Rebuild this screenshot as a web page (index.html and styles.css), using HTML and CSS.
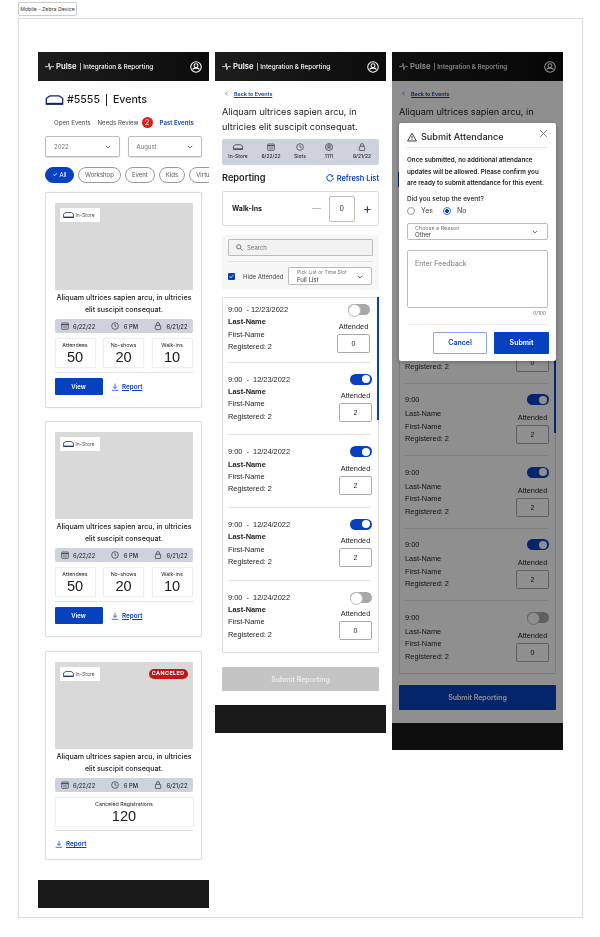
FILE: index.html
```html
<!DOCTYPE html>
<html lang="en">
<head>
<meta charset="utf-8"/>
<meta name="viewport" content="width=device-width,initial-scale=1"/>
<title>Mobile - Zebra Device</title>
<link rel="stylesheet" href="styles.css">
</head>
<body>
<svg class="defs" width="0" height="0">
  <symbol id="store" viewBox="0 0 20 11"><path d="M1 3.6 5 1h10l4 2.6V10H1z" fill="none" stroke="currentColor" stroke-width="1.4"/><path d="M1 9.6h18" stroke="currentColor" stroke-width="2"/></symbol>
  <symbol id="pulse" viewBox="0 0 14 12"><path d="M0 6.2h5.2L6.4 1l1.2 10 1.2-4.8H14" fill="none" stroke="currentColor" stroke-width="1.2"/></symbol>
  <symbol id="user" viewBox="0 0 16 16"><circle cx="8" cy="8" r="7" fill="none" stroke="currentColor" stroke-width="1.4"/><circle cx="8" cy="6.2" r="2.6" fill="none" stroke="currentColor" stroke-width="1.4"/><path d="M3.4 11.2c1-1.3 2.4-1.7 4.6-1.7s3.6.4 4.6 1.7" fill="none" stroke="currentColor" stroke-width="1.4"/></symbol>
  <symbol id="cal" viewBox="0 0 12 12"><rect x="1" y="1.5" width="10" height="9.5" rx="1" fill="none" stroke="currentColor"/><path d="M1 4h10" stroke="currentColor" stroke-width="1.4"/><path d="M3 6.5h6M3 8.5h6" stroke="currentColor" stroke-width=".6"/></symbol>
  <symbol id="clock" viewBox="0 0 12 12"><circle cx="6" cy="6" r="5" fill="none" stroke="currentColor"/><path d="M6 3v3.2l2.2 1.2" fill="none" stroke="currentColor"/></symbol>
  <symbol id="lock" viewBox="0 0 12 12"><rect x="2" y="5" width="8" height="6.2" rx="1" fill="none" stroke="currentColor"/><path d="M3.8 5V3a2.2 2.2 0 0 1 4.4 0v2" fill="none" stroke="currentColor"/></symbol>
  <symbol id="down" viewBox="0 0 12 12"><path d="M6 1v7M3 5.4 6 8.2l3-2.8M1 11h10" fill="none" stroke="currentColor" stroke-width="1.1"/></symbol>
  <symbol id="chev" viewBox="0 0 10 6"><path d="M1.5 1 5 4.5 8.5 1" fill="none" stroke="currentColor" stroke-width="1.3"/></symbol>
  <symbol id="warn" viewBox="0 0 12 11"><path d="M6 1 11.3 10.3H.7z" fill="none" stroke="currentColor"/><path d="M6 4.2v3.2M6 8.2v1" stroke="currentColor"/></symbol>
  <symbol id="refresh" viewBox="0 0 12 12"><path d="M10 3.2A4.8 4.8 0 1 0 10.8 6" fill="none" stroke="currentColor" stroke-width="1.5"/><path d="M10.8.6v3.6H7.2z" fill="currentColor"/></symbol>
  <symbol id="close" viewBox="0 0 10 10"><path d="M1 1l8 8M9 1l-8 8" stroke="currentColor" stroke-width=".8"/></symbol>
</svg>

<div class="tag">Mobile - Zebra Device</div>
<div class="frame">

  <!-- events list -->
  <div class="phone">
    <div class="topbar">
      <svg class="logo"><use href="#pulse"/></svg><b>Pulse</b><span>| Integration &amp; Reporting</span>
      <svg class="me"><use href="#user"/></svg>
    </div>
    <div class="body events">
      <div class="pagehead"><svg class="storebig"><use href="#store"/></svg>#5555 <i></i> Events</div>
      <div class="tabs">
        <span>Open Events</span><span>Needs Review</span><em>2</em><a>Past Events</a>
      </div>
      <div class="selects">
        <div class="sel">2022<svg><use href="#chev"/></svg></div>
        <div class="sel">August<svg><use href="#chev"/></svg></div>
      </div>
      <div class="chips">
        <span class="chip on">✓ All</span><span class="chip">Workshop</span><span class="chip">Event</span><span class="chip">Kids</span><span class="chip">Virtual</span>
      </div>

      <div class="card">
        <div class="pic"><div class="kind"><svg><use href="#store"/></svg>In-Store</div></div>
        <p class="name">Aliquam ultrices sapien arcu, in ultricies elit suscipit consequat.</p>
        <div class="meta">
          <span><svg><use href="#cal"/></svg>6/22/22</span><span><svg><use href="#clock"/></svg>6 PM</span><span><svg><use href="#lock"/></svg>6/21/22</span>
        </div>
        <div class="stats">
          <div class="stat"><small>Attendees</small>50</div>
          <div class="stat"><small>No-shows</small>20</div>
          <div class="stat"><small>Walk-ins</small>10</div>
        </div>
        <div class="actions"><button class="view">View</button><a class="report"><svg><use href="#down"/></svg><u>Report</u></a></div>
      </div>

      <div class="card">
        <div class="pic"><div class="kind"><svg><use href="#store"/></svg>In-Store</div></div>
        <p class="name">Aliquam ultrices sapien arcu, in ultricies elit suscipit consequat.</p>
        <div class="meta">
          <span><svg><use href="#cal"/></svg>6/22/22</span><span><svg><use href="#clock"/></svg>6 PM</span><span><svg><use href="#lock"/></svg>6/21/22</span>
        </div>
        <div class="stats">
          <div class="stat"><small>Attendees</small>50</div>
          <div class="stat"><small>No-shows</small>20</div>
          <div class="stat"><small>Walk-ins</small>10</div>
        </div>
        <div class="actions"><button class="view">View</button><a class="report"><svg><use href="#down"/></svg><u>Report</u></a></div>
      </div>

      <div class="card short">
        <div class="pic"><div class="kind"><svg><use href="#store"/></svg>In-Store</div><div class="canceled">CANCELED</div></div>
        <p class="name">Aliquam ultrices sapien arcu, in ultricies elit suscipit consequat.</p>
        <div class="meta">
          <span><svg><use href="#cal"/></svg>6/22/22</span><span><svg><use href="#clock"/></svg>6 PM</span><span><svg><use href="#lock"/></svg>6/21/22</span>
        </div>
        <div class="stat wide"><small>Canceled Registrations</small>120</div>
        <div class="actions"><a class="report"><svg><use href="#down"/></svg><u>Report</u></a></div>
      </div>
    </div>
    <div class="foot"></div>
  </div>

  <!-- reporting -->
  <div class="phone">
    <div class="topbar">
      <svg class="logo"><use href="#pulse"/></svg><b>Pulse</b><span>| Integration &amp; Reporting</span>
      <svg class="me"><use href="#user"/></svg>
    </div>
    <div class="body report-page">
      <a class="back"><svg><use href="#chev"/></svg><u>Back to Events</u></a>
      <h2>Aliquam ultrices sapien arcu, in ultricies elit suscipit consequat.</h2>
      <div class="infobar">
        <span><svg class="w"><use href="#store"/></svg>In-Store</span>
        <span><svg><use href="#cal"/></svg>6/22/22</span>
        <span><svg><use href="#clock"/></svg>Slots</span>
        <span><svg><use href="#user"/></svg>1111</span>
        <span><svg><use href="#lock"/></svg>6/21/22</span>
      </div>
      <div class="rephead"><h3>Reporting</h3><a><svg><use href="#refresh"/></svg>Refresh List</a></div>
      <div class="walkins"><b>Walk-Ins</b><span class="minus"></span><div class="count">0</div><span class="plus">+</span></div>
      <div class="filters">
        <div class="search"><svg viewBox="0 0 10 10"><circle cx="4" cy="4" r="3" fill="none" stroke="#444"/><path d="m6.2 6.2 3 3" stroke="#444"/></svg>Search</div>
        <div class="filterrow">
          <span class="check">✓</span><span class="hide">Hide Attended</span>
          <div class="pick"><small>Pick List or Time Slot</small>Full List<svg><use href="#chev"/></svg></div>
        </div>
      </div>
      <div class="list">
        <div class="scroll"></div>
        <div class="row first"><div class="who"><div>9:00 &nbsp;- 12/23/2022</div><b>Last-Name</b><div>First-Name</div><div>Registered: 2</div></div><div class="att left"><span class="tog"></span><label>Attended</label><div class="num">0</div></div></div>
        <div class="row"><div class="who"><div>9:00 &nbsp;- &nbsp;12/23/2022</div><b>Last-Name</b><div>First-Name</div><div>Registered: 2</div></div><div class="att"><span class="tog on"></span><label>Attended</label><div class="num">2</div></div></div>
        <div class="row"><div class="who"><div>9:00 &nbsp;- &nbsp;12/24/2022</div><b>Last-Name</b><div>First-Name</div><div>Registered: 2</div></div><div class="att"><span class="tog on"></span><label>Attended</label><div class="num">2</div></div></div>
        <div class="row"><div class="who"><div>9:00 &nbsp;- &nbsp;12/24/2022</div><b>Last-Name</b><div>First-Name</div><div>Registered: 2</div></div><div class="att"><span class="tog on"></span><label>Attended</label><div class="num">2</div></div></div>
        <div class="row last"><div class="who"><div>9:00 &nbsp;- &nbsp;12/24/2022</div><b>Last-Name</b><div>First-Name</div><div>Registered: 2</div></div><div class="att"><span class="tog"></span><label>Attended</label><div class="num">0</div></div></div>
      </div>
      <button class="submit off">Submit Reporting</button>
    </div>
    <div class="foot"></div>
  </div>

  <!-- submit attendance dialog -->
  <div class="phone dimmed">
    <div class="topbar">
      <svg class="logo"><use href="#pulse"/></svg><b>Pulse</b><span>| Integration &amp; Reporting</span>
      <svg class="me"><use href="#user"/></svg>
    </div>
    <div class="body report-page">
      <a class="back"><svg><use href="#chev"/></svg><u>Back to Events</u></a>
      <h2>Aliquam ultrices sapien arcu, in</h2>
      <div class="list under">
        <div class="scroll"></div>
        <div class="row plain"><div class="who"><div>9:00</div><div>Last-Name</div><div>First-Name</div><div>Registered: 2</div></div><div class="att"><span class="tog"></span><label class="covered">Attended</label><div class="num">0</div></div></div>
        <div class="row plain"><div class="who"><div>9:00</div><div>Last-Name</div><div>First-Name</div><div>Registered: 2</div></div><div class="att"><span class="tog on"></span><label>Attended</label><div class="num">2</div></div></div>
        <div class="row plain"><div class="who"><div>9:00</div><div>Last-Name</div><div>First-Name</div><div>Registered: 2</div></div><div class="att"><span class="tog on"></span><label>Attended</label><div class="num">2</div></div></div>
        <div class="row plain"><div class="who"><div>9:00</div><div>Last-Name</div><div>First-Name</div><div>Registered: 2</div></div><div class="att"><span class="tog on"></span><label>Attended</label><div class="num">2</div></div></div>
        <div class="row plain nob"><div class="who"><div>9:00</div><div>Last-Name</div><div>First-Name</div><div>Registered: 2</div></div><div class="att"><span class="tog"></span><label>Attended</label><div class="num">0</div></div></div>
      </div>
      <button class="submit">Submit Reporting</button>
    </div>
    <div class="foot"></div>
    <div class="edge"></div>
    <div class="scrim"></div>
    <div class="modal">
      <div class="mhead"><svg><use href="#warn"/></svg><h4>Submit Attendance</h4><svg class="x"><use href="#close"/></svg></div>
      <p class="warntext">Once submitted, no additional attendance updates will be allowed. Please confirm you are ready to submit attendance for this event.</p>
      <div class="q">Did you setup the event?</div>
      <div class="radios"><span class="radio"></span><span>Yes</span><span class="radio sel2"></span><span>No</span></div>
      <div class="reason"><small>Choose a Reason</small>Other<svg><use href="#chev"/></svg></div>
      <div class="feedback">Enter Feedback</div>
      <div class="counter">0/100</div>
      <div class="mbtns"><button class="cancel">Cancel</button><button class="ok">Submit</button></div>
    </div>
  </div>

</div>
</body>
</html>
```

FILE: styles.css
```css
*{box-sizing:border-box}
body{margin:0;background:#fff;color:#1c1c1c;font-family:Inter,"Liberation Sans",sans-serif}
.defs{position:absolute}
svg{display:block}
button{font-family:inherit;border:0;padding:0}
p,h2,h3,h4{margin:0}
.tag{width:59px;height:14px;margin:2px 0 2px 18px;border:1px solid #ccc;border-radius:2px;font-size:5.2px;line-height:12px;text-align:center;color:#333}
.frame{width:565px;height:900px;margin-left:18px;border:1px solid #ddd;padding:33px 0 0 19px;display:flex;gap:6px;align-items:flex-start;will-change:transform}

.phone{width:171px;position:relative;overflow:hidden;background:#fff}
.topbar{height:29px;background:linear-gradient(90deg,#1d1d1d,#0c0c0c);color:#fff;display:flex;align-items:center;padding-left:7px;font-size:6.35px;font-weight:500}
.topbar b{font-size:7.7px;font-weight:600;margin-right:3px}
.topbar .logo{width:9px;height:9px;margin-right:2px}
.topbar .me{width:12px;height:12px;margin-left:auto;margin-right:7px}
.foot{height:28px;background:#1a1a1a}

/* events */
.events{padding:0 7px;height:799px}
.pagehead{height:36px;display:flex;align-items:center;font-size:10.6px;font-weight:500;gap:3px;color:#1c1c1c;padding-top:1px}
.pagehead i{width:1px;height:12px;background:#222;margin:0 3px}
.storebig{width:19px;height:10px;color:#14275c}
.tabs{display:flex;align-items:center;height:14px;margin-top:-2px;padding-left:9px;font-size:6.1px;color:#444;gap:7px}
.tabs em{font-style:normal;width:11px;height:11px;border-radius:50%;background:#d81e1e;color:#fff;text-align:center;line-height:11px;font-size:7.5px;margin-left:-4px}
.tabs a{color:#0b3fb5;font-weight:600}
.selects{display:flex;gap:8px;margin-top:7px}
.sel{width:74.5px;height:21px;border:1px solid #bbb;border-radius:2px;display:flex;align-items:center;justify-content:space-between;padding:0 8px;font-size:6px;color:#777;box-shadow:0 1px 1px #ddd}
.sel svg{width:6px;height:4px;color:#333}
.chips{display:flex;gap:4px;margin-top:10px;width:164px;overflow:hidden}
.chip{height:16px;line-height:14px;padding:0 6px;border:1px solid #999;border-radius:8px;font-size:6px;color:#555;flex:none}
.chip.on{background:#0841c0;border-color:#0841c0;color:#fff;padding:0 6.5px}
.card{width:157px;height:216px;margin-top:9px;border:1px solid #ddd;border-radius:2px;padding:10px 8.5px 0;box-shadow:0 0 1px #ccc}
.card+.card{margin-top:13px}
.card.short{height:209px;margin-top:14px}
.pic{height:87px;background:#d9d9d9;border-radius:1px;padding:5px;display:flex;justify-content:space-between;align-items:flex-start}
.kind{width:40px;height:14px;background:#fff;border-radius:1px;display:flex;align-items:center;gap:2px;padding-left:3px;font-size:5px;color:#555}
.kind svg{width:11px;height:6px;color:#14275c}
.canceled{background:#c01818;color:#fff;font-size:5.4px;font-weight:700;letter-spacing:.4px;height:9.5px;line-height:9.5px;padding:0 3px;border-radius:5px;margin-top:2px}
.name{font-size:7.1px;font-weight:500;line-height:11.6px;text-align:center;margin-top:2px;color:#1c1c1c;width:139px}
.meta{height:14px;background:#cdd2dc;border-radius:2px;margin-top:4px;display:flex;justify-content:space-between;align-items:center;padding:0 5px 0 6px;font-size:5.8px;font-weight:500;color:#2c2c34}
.meta span{display:flex;align-items:center;gap:4.5px}
.meta svg{width:8px;height:8px}
.stats{display:flex;justify-content:space-between;margin-top:5px;padding-bottom:4px;border-bottom:1.5px solid #e4e4e4}
.stat{width:41px;height:30px;border:1px solid #eee;border-radius:1px;box-shadow:0 0 1px #ddd;text-align:center;font-family:"Liberation Sans",sans-serif;font-size:14.6px;line-height:15px;color:#1a1a1a}
.stat small{display:block;font-family:Inter,sans-serif;font-size:5.3px;line-height:6px;padding-top:3px;margin-bottom:2px;color:#222}
.stat.wide{width:139px;height:30px;margin-top:5px}
.actions{display:flex;align-items:center;gap:8px;margin-top:5px}
.view{width:48px;height:17px;background:#0841c0;color:#fff;border-radius:1px;font-size:6px;font-weight:600}
.report{display:flex;align-items:center;gap:3.5px;color:#0b3fb5;font-size:6.3px;font-weight:600}
.report svg{width:8px;height:8px}
.short .actions{padding-top:9px;border-top:1px solid #ddd;margin-top:3px}

/* reporting */
.report-page{padding:0 7px}
.back{display:flex;align-items:center;gap:5px;height:25px;color:#0b3fb5;font-size:5.4px;font-weight:600;padding-left:2px}
.back svg{width:5px;height:5px;transform:rotate(90deg)}
h2{font-size:9.15px;font-weight:400;line-height:14.5px;height:32px;margin-top:-1px;color:#1c1c1c}
.infobar{height:26px;background:#cdd2dc;border-radius:2px;display:grid;grid-template-columns:32px 34px 24px 34px 32px;justify-items:center;margin-top:2px;padding-top:4px;font-size:5px;font-weight:500;color:#2c2c34}
.infobar span{display:flex;flex-direction:column;align-items:center;gap:2px}
.infobar svg{width:8px;height:8px}
.infobar svg.w{width:10px}
.rephead{display:flex;justify-content:space-between;align-items:center;height:26px}
h3{font-size:9.2px;font-weight:600;margin-top:-1px}
.rephead a{display:flex;align-items:center;gap:3px;font-size:7.4px;font-weight:600;color:#0b3fb5}
.rephead svg{width:8px;height:8px}
.walkins{height:35px;border:1px solid #ddd;border-radius:2px;display:flex;align-items:center;padding:0 6px 0 9px;font-size:7px}
.minus{width:9px;height:1px;background:#bbb;margin-left:auto;margin-right:8px}
.count{width:26px;height:26px;border:1px solid #bbb;border-radius:2px;text-align:center;line-height:24px;color:#333;font-size:7px}
.plus{color:#0b3fb5;font-size:14px;margin-left:8px;line-height:14px;margin-top:-2px}
.filters{height:55px;margin-top:9px;background:#f7f7f7;padding:4px 6px 0}
.search{height:17px;border:1px solid #bbb;border-radius:1px;background:#f2f2f2;display:flex;align-items:center;gap:4px;padding-left:7px;font-size:6px;color:#777}
.search svg{width:7px;height:7px}
.filterrow{display:flex;align-items:center;margin-top:5px;border-top:1px solid #e2e2e2;padding-top:5px}
.check{width:7px;height:7px;background:#0f3fae;color:#fff;font-size:6px;line-height:7px;text-align:center;margin-right:8px;border-radius:1px}
.hide{font-size:6px;color:#444;width:45px}
.pick{width:84px;height:18px;border:1px solid #bbb;border-radius:2px;padding:0 8px;font-size:6px;color:#333;line-height:7px;position:relative;background:#fff}
.pick small{display:block;font-size:5px;color:#777;padding-top:1px;line-height:6px;margin-bottom:1px}
.pick svg,.reason svg{position:absolute;right:8px;top:7px;width:6px;height:4px}

.list{position:relative;margin-top:7px;height:356px;border:1px solid #ddd;border-radius:1px;font-family:"Liberation Sans",sans-serif}
.scroll{position:absolute;right:-1px;top:-1px;width:2px;height:123px;background:#0841c0}
.row{display:flex;justify-content:space-between;margin:0 7px 0 5px;padding:11px 0;border-bottom:1px solid #e2e2e2;font-size:7.4px;line-height:12.4px;color:#222}
.row.first{padding:6px 0 8px}
.row.last{padding:11px 0 13px;border-bottom:0}
.att{width:33px;display:flex;flex-direction:column;align-items:flex-end;margin-right:-1px}
.att.left{margin-right:1px}
.att label{display:block;width:33px;text-align:center;margin-top:6.5px;line-height:10px}
.tog{display:block;width:22px;height:11px;border-radius:6px;background:#a8a8a8;position:relative}
.tog:after{content:"";position:absolute;left:0;top:0;width:11px;height:11px;border-radius:50%;background:#fff;border:1px solid #bbb}
.tog.on{background:#0841c0}
.tog.on:after{left:12px;top:1.5px;width:8px;height:8px;border:0}
.num{width:33px;height:19px;border:1px solid #aaa;border-radius:2px;margin-top:2px;text-align:center;line-height:17px;font-size:7px}
.submit{display:block;width:157px;height:24px;margin-top:14px;background:#0841c0;color:#fff;border-radius:1px;font-size:7px;font-weight:600;margin-bottom:14px}
.submit.off{background:#c4c4c4;color:#ececec}

/* dialog */
.under{margin-top:173px;height:364px}
.row.plain{padding:10.5px 0 0;height:72.5px}
.row.plain .who div{line-height:12.6px}
.row.plain .who div:first-child{margin-bottom:1.5px}
.row.plain label{margin-top:8px}
.row.plain label.covered{visibility:hidden}
.row.nob{border-bottom:0}
.dimmed .submit{margin-top:11px;height:25px;margin-bottom:13px}
.dimmed .foot{height:27px}
.edge{position:absolute;left:6px;top:120px;width:1px;height:15px;background:#0841c0}
.scrim{position:absolute;inset:0;background:rgba(0,0,0,.44)}
.modal{position:absolute;left:7px;top:71px;width:157px;height:238px;background:#fff;border-radius:2px;box-shadow:0 1px 4px rgba(0,0,0,.3);padding:0 8px}
.mhead{height:25px;display:flex;align-items:center;gap:4px;border-bottom:1px solid #e6e6e6;padding-top:3px}
.mhead svg{width:10px;height:10px}
h4{font-size:9.1px;font-weight:500}
.mhead .x{width:9px;height:9px;margin-left:auto;margin-right:0;margin-top:-6px;color:#555}
.warntext{font-size:6.25px;font-weight:600;line-height:11.6px;margin-top:7px;color:#222}
.q{font-size:6.5px;font-weight:500;margin-top:3px;line-height:12px}
.radios{display:flex;align-items:center;font-size:7px;color:#444;height:12px}
.radio{width:8px;height:8px;border-radius:50%;border:1px solid #999;margin-right:6px}
.radio.sel2{border-color:#3a6fd8;background:radial-gradient(circle,#0841c0 45%,#fff 50%);margin-left:10px}
.reason{position:relative;height:17px;margin-top:6px;border:1px solid #bbb;border-radius:2px;padding-left:7px;font-size:6.1px;line-height:7px;color:#333}
.reason small{display:block;font-size:5.4px;line-height:6px;color:#777;padding-top:1px}
.reason svg{top:6px;right:9px}
.feedback{height:58px;margin-top:10px;border:1px solid #bbb;border-radius:2px;padding:8px 7px;font-size:7px;color:#777}
.counter{font-size:4.8px;text-align:right;color:#666;margin-top:2px;padding-right:2px;height:15px;border-bottom:1px solid #eee;line-height:6px}
.mbtns{display:flex;justify-content:flex-end;gap:7px;margin-top:7px;margin-right:-1px}
.mbtns button{height:22px;font-size:7px;font-weight:600;border-radius:1px}
.cancel{width:54px;background:#fff;color:#0841c0;border:1px solid #8ea6dc!important}
.ok{width:55px;background:#0841c0;color:#fff}
```
